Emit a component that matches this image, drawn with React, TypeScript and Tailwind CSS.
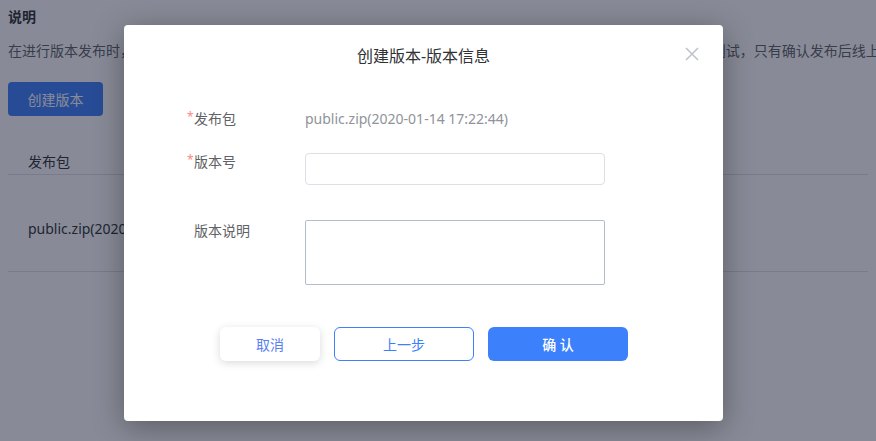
import React from "react";

const font = { fontFamily: '"Noto Sans", "Noto Sans CJK SC", sans-serif' };

export default function App() {
  return (
    <div
      className="relative w-[876px] h-[441px] overflow-hidden bg-white"
      style={font}
    >
      {/* underlying page */}
      <div className="px-2 pt-[7px]">
        <div className="text-[14px] leading-[20px] font-bold text-[#303133]">说明</div>
        <div className="mt-[14px] text-[14px] leading-[20px] text-[#606266] whitespace-nowrap">
          在进行版本发布时，系统会先将该发布包部署到测试环境， 您可以在测试环境中对新版本的功能进行充分的验证和测试，只有确认发布后线上环境才会更新。
        </div>
        <button className="mt-[21px] w-[95px] h-[34px] rounded-[4px] bg-[#3d80fb] text-white text-[14px]">
          创建版本
        </button>
        <div className="mt-[36px] border-b border-[#dcdfe6] pl-5 pb-[2px] text-[14px] leading-[20px] text-[#303133]">
          发布包
        </div>
        <div className="h-[97px] border-b border-[#dcdfe6] pl-5 pt-[44px] text-[14px] leading-[20px] text-[#303133]">
          public.zip(2020-01-14 17:22:44)
        </div>
      </div>

      {/* overlay */}
      <div className="absolute inset-0 bg-[#111830]/50" />

      {/* modal */}
      <div className="absolute left-[124px] top-[25px] w-[599px] h-[396px] bg-white rounded-[4px] shadow-[0_6px_30px_rgba(0,0,0,0.35)]">
        <div className="pt-[19px] text-center text-[16px] leading-[24px] text-[#303133]">
          创建版本-版本信息
        </div>
        <button className="absolute left-[561px] top-[22px] w-[14px] h-[14px] text-[#c0c4cc]">
          <svg viewBox="0 0 14 14" width="14" height="14" fill="none" stroke="currentColor" strokeWidth="1.6">
            <path d="M1 1L13 13M13 1L1 13" />
          </svg>
        </button>

        <div className="mt-[41px] flex flex-col">
          {/* row 1 */}
          <div className="flex items-center h-[20px]">
            <div className="w-[181px] pl-[63px] flex items-start text-[14px] leading-[20px] text-[#606266]">
              <span className="w-[7px] text-[12px] leading-[16px] text-[#f78989]">*</span>
              <span>发布包</span>
            </div>
            <div className="text-[14px] leading-[20px] text-[#909399]">public.zip(2020-01-14 17:22:44)</div>
          </div>
          {/* row 2 */}
          <div className="mt-[24px] flex items-start">
            <div className="w-[181px] pl-[63px] flex items-start text-[14px] leading-[20px] text-[#606266] -mt-[1px]">
              <span className="w-[7px] text-[12px] leading-[16px] text-[#f78989]">*</span>
              <span>版本号</span>
            </div>
            <input className="w-[300px] h-[32px] rounded-[4px] border border-[#dcdfe6] outline-none px-3 text-[14px]" />
          </div>
          {/* row 3 */}
          <div className="mt-[35px] flex items-start">
            <div className="w-[181px] pl-[70px] pt-[1px] text-[14px] leading-[20px] text-[#606266]">
              版本说明
            </div>
            <textarea className="w-[300px] h-[65px] rounded-[2px] border border-[#b4bccc] outline-none resize-none px-3 py-1 text-[14px]" />
          </div>
        </div>

        <div className="mt-[42px] pl-[96px] flex gap-[14px]">
          <button className="w-[100px] h-[34px] rounded-[6px] bg-white text-[14px] text-[#5a7ff0] shadow-[0_2px_8px_rgba(0,0,0,0.15)]">
            取消
          </button>
          <button className="w-[140px] h-[34px] rounded-[6px] bg-white border border-[#3d80fb] text-[14px] text-[#3d80fb]">
            上一步
          </button>
          <button className="w-[140px] h-[34px] rounded-[6px] bg-[#3d80fb] text-[14px] font-medium text-white">
            确 认
          </button>
        </div>
      </div>
    </div>
  );
}
